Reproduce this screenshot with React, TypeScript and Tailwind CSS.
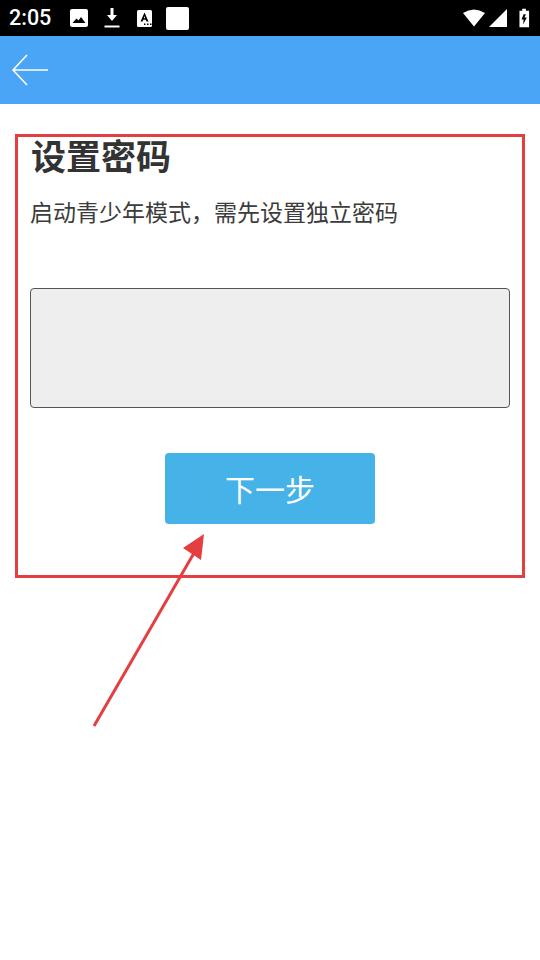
export default function App() {
  return (
    <div className="relative w-[540px] h-[960px] overflow-hidden bg-white font-['Noto_Sans_CJK_SC',sans-serif]">
      <div className="h-9 bg-black flex items-center justify-between pl-[9px] pr-[10px]">
        <div className="flex items-center">
          <span className="text-white text-[21.5px] leading-none font-['Roboto',sans-serif] font-medium w-[61px]">2:05</span>
          <svg width="18" height="18" viewBox="0 0 18 18" className="mr-[16px]">
            <rect x="0" y="0" width="18" height="18" rx="2" fill="#fff" />
            <path d="M2.5 14 L6.5 9.5 L8.5 11.5 L11 8 L15.5 14 Z" fill="#000" />
          </svg>
          <svg width="16" height="20" viewBox="0 0 16 20" className="mr-[17px]">
            <path d="M6.5 0h3v7h3.5L8 13 3 7h3.5z" fill="#fff" />
            <rect x="0.5" y="17.5" width="15" height="2" fill="#fff" />
          </svg>
          <svg width="15" height="17" viewBox="0 0 15 17" className="mr-[14px]">
            <rect width="15" height="17" rx="1.5" fill="#fff" />
            <path d="M7.5 2.5 L11.5 11.5 H9.4 L8.7 9.7 H6.3 L5.6 11.5 H3.5 Z M6.9 8.2 H8.1 L7.5 6 Z" fill="#000" />
            <rect x="7" y="13.5" width="1.5" height="1.5" fill="#000" />
            <rect x="10" y="13.5" width="1.5" height="1.5" fill="#000" />
            <rect x="13" y="13.5" width="1.5" height="1.5" fill="#000" />
          </svg>
          <div className="w-[23px] h-[23px] bg-white rounded-[2px]" />
        </div>
        <div className="flex items-center">
          <svg width="22" height="18" viewBox="0 0 22 18" className="mr-[4px]">
            <path d="M0 4 Q11 -3 22 4 L11 17.5 Z" fill="#fff" />
          </svg>
          <svg width="18" height="18" viewBox="0 0 18 18" className="mr-[12px]">
            <path d="M18 0 V18 H0 Z" fill="#fff" />
          </svg>
          <svg width="11" height="20" viewBox="0 0 12 20">
            <path fillRule="evenodd" d="M3.5 0h4v2h3.5v18H0.5V2h3z M5 6 L2.8 11.5 H5 L4.5 17 L8.5 9.5 H6 L7.5 6z" fill="#fff" />
          </svg>
        </div>
      </div>
      <div className="h-[68px] bg-[#4aa5f6] flex items-center pl-[12px]">
        <svg width="36" height="32" viewBox="0 0 36 32" fill="none" stroke="#fff" strokeWidth="1.6">
          <path d="M36 16 H1 M15 1 L1 16 L15 31" />
        </svg>
      </div>
      <div className="px-[30px]">
        <h1 className="text-[35px] leading-[44px] font-bold text-[#333] mt-[29px] pl-[1px]">设置密码</h1>
        <p className="text-[23px] leading-[32px] text-[#3c3c3c] mt-[18px] whitespace-nowrap">启动青少年模式，需先设置独立密码</p>
        <div className="h-[120px] mt-[61px] bg-[#eeeeee] border border-[#555] rounded-[4px]" />
        <div className="flex justify-center mt-[45px]">
          <button className="w-[210px] h-[71px] bg-[#45b2e8] rounded-[4px] text-white text-[30px]">下一步</button>
        </div>
      </div>
      <div className="absolute left-[15px] top-[134px] w-[510px] h-[444px] border-[3px] border-[#e53e41]" />
      <svg className="absolute left-0 top-0" width="540" height="960" fill="none">
        <line x1="94" y1="726" x2="194" y2="553" stroke="#e53e41" strokeWidth="3" />
        <path d="M204 534 L183 548 L201 560 Z" fill="#e53e41" />
      </svg>
    </div>
  );
}
